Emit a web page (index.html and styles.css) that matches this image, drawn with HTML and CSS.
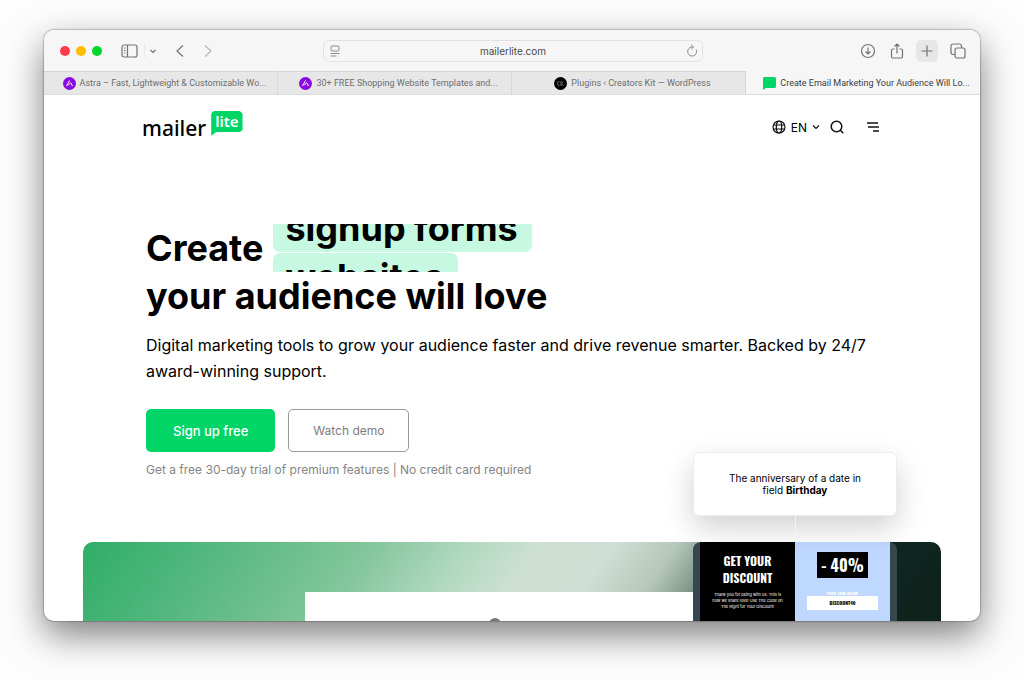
FILE: index.html
```html
<!DOCTYPE html>
<html lang="en">
<head>
    <meta charset="UTF-8">
    <meta name="viewport" content="width=device-width, initial-scale=1.0">
    <title>Create Email Marketing Your Audience Will Love</title>
    <link rel="stylesheet" href="styles.css">
</head>
<body>
    <div class="window">
        <div class="toolbar">
            <div class="toolbar-left">
                <div class="lights">
                    <span class="light red"></span>
                    <span class="light yellow"></span>
                    <span class="light green"></span>
                </div>
                <button class="tool" aria-label="Sidebar">
                    <svg width="18" height="16" viewBox="0 0 18 16"><rect x="1" y="2" width="15" height="12" rx="2"/><path d="M6.500 2v12M3 5h1.500M3 7.500h1.500M3 10h1.500"/></svg>
                </button>
                <button class="tool drop" aria-label="Tab groups">
                    <svg width="8" height="8" viewBox="0 0 8 8"><path d="M1.500 3L4 5.500 6.500 3"/></svg>
                </button>
                <button class="tool back" aria-label="Back">
                    <svg width="10" height="14" viewBox="0 0 10 14"><path d="M8 1.500L2 7l6 5.500"/></svg>
                </button>
                <button class="tool forward" aria-label="Forward">
                    <svg width="10" height="14" viewBox="0 0 10 14"><path d="M2 1.500L8 7l-6 5.500"/></svg>
                </button>
            </div>
            <div class="address">
                <svg width="10" height="12" viewBox="0 0 10 12"><rect x="1" y="1" width="8" height="5" rx="1"/><path d="M.500 8.500h9M.500 11h6"/></svg>
                <input type="text" value="mailerlite.com" aria-label="Address">
                <button class="reload" aria-label="Reload">
                    <svg width="12" height="13" viewBox="0 0 12 13"><path d="M10.200 5.500A4.500 4.500 0 1 1 6 3h1.500M5.200 .800L7.500 3 5.200 5.300"/></svg>
                </button>
            </div>
            <div class="toolbar-right">
                <button class="tool" aria-label="Downloads">
                    <svg width="16" height="16" viewBox="0 0 16 16"><circle cx="8" cy="8" r="6.500"/><path d="M8 4.500v6.500M5.500 8.500L8 11l2.500-2.500"/></svg>
                </button>
                <button class="tool" aria-label="Share">
                    <svg width="14" height="16" viewBox="0 0 14 16"><path d="M4.500 6H3a1.500 1.500 0 0 0-1.500 1.500v6A1.500 1.500 0 0 0 3 15h8a1.500 1.500 0 0 0 1.500-1.500v-6A1.500 1.500 0 0 0 11 6H9.500M7 10.500V1M4.500 3.500L7 1l2.500 2.500"/></svg>
                </button>
                <button class="tool add" aria-label="New tab">
                    <svg width="12" height="12" viewBox="0 0 12 12"><path d="M6 .500v11M.500 6h11"/></svg>
                </button>
                <button class="tool" aria-label="Tab overview">
                    <svg width="16" height="16" viewBox="0 0 16 16"><rect x="5" y="5" width="10" height="10" rx="2"/><path d="M5 11.500H3a2 2 0 0 1-2-2V3a2 2 0 0 1 2-2h6.500a2 2 0 0 1 2 2v2"/></svg>
                </button>
            </div>
        </div>
        <nav class="tabs">
            <a class="tab" href="#">
                <svg width="13" height="13" viewBox="0 0 13 13"><circle cx="6.500" cy="6.500" r="6.500" fill="#8a0be0"/><path d="M3.500 9l3-5.500M7.500 5.500L9.500 9M5.300 8.300l1.500-2" stroke="#fff" fill="none"/></svg>
                <span>Astra – Fast, Lightweight &amp; Customizable Wo...</span>
            </a>
            <a class="tab" href="#">
                <svg width="13" height="13" viewBox="0 0 13 13"><circle cx="6.500" cy="6.500" r="6.500" fill="#8a0be0"/><path d="M3.500 9l3-5.500M7.500 5.500L9.500 9M5.300 8.300l1.500-2" stroke="#fff" fill="none"/></svg>
                <span>30+ FREE Shopping Website Templates and...</span>
            </a>
            <a class="tab" href="#">
                <svg width="13" height="13" viewBox="0 0 13 13"><circle cx="6.500" cy="6.500" r="6.500"/><path d="M5.500 4.500A2 2 0 1 0 5.500 8.500M7 4v5M9.500 4.500L7.500 6.500l2 2.500" stroke="#999" stroke-width=".7" fill="none"/></svg>
                <span>Plugins ‹ Creators Kit — WordPress</span>
            </a>
            <a class="tab active" href="#">
                <svg width="13" height="13" viewBox="0 0 13 13"><path d="M1.500 0h10A1.500 1.500 0 0 1 13 1.500v8a1.500 1.500 0 0 1-1.500 1.500H3L0 13V1.500A1.500 1.500 0 0 1 1.500 0z" fill="#00d566"/></svg>
                <span>Create Email Marketing Your Audience Will Lo...</span>
            </a>
        </nav>

        <div class="page">
            <header class="header">
                <a class="logo" href="#">
                    <span class="logo-name">mailer</span>
                    <span class="logo-badge">lite</span>
                </a>
                <div class="menu">
                    <button class="lang">
                        <svg width="14" height="14" viewBox="0 0 14 14"><circle cx="7" cy="7" r="6"/><ellipse cx="7" cy="7" rx="2.700" ry="6"/><path d="M1.500 5h11M1.500 9h11"/></svg>
                        EN
                        <svg width="8" height="8" viewBox="0 0 8 8"><path d="M1 2.500l3 3 3-3"/></svg>
                    </button>
                    <button class="search" aria-label="Search">
                        <svg width="14" height="14" viewBox="0 0 14 14"><circle cx="6.500" cy="6.500" r="5.300"/><path d="M10.300 10.300L13.300 13.300"/></svg>
                    </button>
                    <button class="burger" aria-label="Menu">
                        <svg width="12" height="12" viewBox="0 0 12 12"><path d="M0 2h11M1 6h11M6 10h6"/></svg>
                    </button>
                </div>
            </header>

            <section class="hero">
                <h1>
                    <span class="first-line">
                        Create
                        <span class="rotator">
                            <span class="word">signup forms</span>
                            <span class="word">websites</span>
                        </span>
                    </span>
                    your audience will love
                </h1>
                <p class="lead">Digital marketing tools to grow your audience faster and drive revenue smarter. Backed by 24/7 award-winning support.</p>
                <div class="actions">
                    <button class="btn primary">Sign up free</button>
                    <button class="btn outline">Watch demo</button>
                </div>
                <p class="note">Get a free 30-day trial of premium features | No credit card required</p>
            </section>

            <section class="art">
                <div class="sheet"><span class="dot"></span></div>
                <div class="phone">
                    <div class="trigger">
                        <p>The anniversary of a date in field <b>Birthday</b></p>
                    </div>
                    <div class="promo dark">
                        <h2>GET YOUR DISCOUNT</h2>
                        <p>Thank you for being with us. This is how we share love! Use The Code on The Right for Your Discount!</p>
                    </div>
                    <div class="promo blue">
                        <strong>- 40%</strong>
                        <small>YOUR CODE BELOW</small>
                        <span class="code">DISCOUNT40</span>
                    </div>
                </div>
            </section>
        </div>
    </div>
</body>
</html>
```
FILE: styles.css
```css
* {
    box-sizing: border-box;
}

body {
    margin: 0;
    height: 100vh;
    padding: 30px 44px 59px;
    background: #fdfdfd;
    font-family: Inter, "Liberation Sans", sans-serif;
    color: #000;
    overflow: hidden;
}

button {
    display: flex;
    align-items: center;
    justify-content: center;
    padding: 0;
    border: none;
    background: none;
    font-family: inherit;
    color: inherit;
    cursor: pointer;
}

a {
    color: inherit;
    text-decoration: none;
}

.window {
    display: flex;
    flex-direction: column;
    height: 100%;
    overflow: hidden;
    border-radius: 10px;
    background: #fff;
    box-shadow: 0 0 1px 1px rgba(0, 0, 0, 0.2), 0 14px 36px rgba(0, 0, 0, 0.5);
}

/* browser toolbar */
.toolbar {
    flex: none;
    display: flex;
    align-items: center;
    height: 41px;
    padding: 0 14px 0 16px;
    background: #f7f6f7;
}

.toolbar svg {
    fill: none;
    stroke: #737373;
    stroke-width: 1.2;
}

.toolbar-left,
.toolbar-right {
    flex: 1;
    display: flex;
    align-items: center;
}

.toolbar-right {
    justify-content: flex-end;
    gap: 14px;
}

.lights {
    display: flex;
    gap: 6px;
    margin-right: 19px;
}

.light {
    width: 10px;
    height: 10px;
    border-radius: 50%;
}

.red {
    background: #ff3b4b;
}

.yellow {
    background: #ffbf00;
}

.green {
    background: #00d52b;
}

.drop {
    height: 14px;
    margin: 0 18px 0 5px;
    padding-left: 4px;
    border-left: 1px solid #e9e9e9;
}

.forward {
    margin-left: 18px;
}

.toolbar .forward svg {
    stroke: #b5b5b5;
}

.toolbar .add {
    width: 22px;
    height: 22px;
    margin: 0 -2px;
    border-radius: 5px;
    background: #e8e7e8;
}

.address {
    display: flex;
    align-items: center;
    width: 42%;
    height: 22px;
    padding: 0 4px 0 6px;
    border: 1px solid #e3e2e3;
    border-radius: 6px;
}

.address input {
    flex: 1;
    min-width: 0;
    border: none;
    outline: none;
    background: none;
    font-family: inherit;
    font-size: 10px;
    text-align: center;
    color: #4a4a4a;
}

.toolbar .address svg {
    stroke: #8c8c8c;
    stroke-width: 1;
}

/* tabs */
.tabs {
    flex: none;
    display: flex;
    height: 24px;
    border-bottom: 1px solid #dcdcdc;
    background: #e8e7e8;
}

.tab {
    flex: 1;
    min-width: 0;
    display: flex;
    align-items: center;
    justify-content: center;
    gap: 4px;
    padding: 0 6px 0 14px;
    border-top: 1px solid #d4d3d4;
    border-right: 1px solid #d9d8d9;
    font-family: Roboto, "Liberation Sans", sans-serif;
    font-size: 9px;
    color: #6e6e6e;
    white-space: nowrap;
}

.tab svg {
    flex: none;
}

.tab.active {
    border-color: #f7f6f7;
    background: #f7f6f7;
    color: #3c3c3c;
}

/* site header */
.page {
    flex: 1;
    min-height: 0;
    display: flex;
    flex-direction: column;
}

.header {
    flex: none;
    display: flex;
    align-items: flex-start;
    justify-content: space-between;
    height: 60px;
    padding: 16px 101px 0 98px;
}

.logo {
    display: flex;
    align-items: flex-start;
    gap: 5px;
    font-family: "Noto Sans", "Open Sans", sans-serif;
}

.logo-name {
    padding-top: 4px;
    font-size: 21px;
    font-weight: 500;
    line-height: 26px;
}

.logo-badge {
    height: 26px;
    padding: 0 4px 4px;
    background: #00d566;
    border-radius: 3px;
    clip-path: polygon(0 3px, 1px 1px, 3px 0, 28px 0, 30px 1px, 100% 3px, 100% 19px, 30px 20px, 28px 21px, 5px 21px, 0 25px);
    font-size: 15px;
    font-weight: 600;
    line-height: 21px;
    color: #fff;
}

.menu {
    display: flex;
    align-items: center;
    height: 32px;
}

.menu svg {
    fill: none;
    stroke: #111;
    stroke-width: 1.2;
}

.lang {
    gap: 5px;
    font-size: 12px;
}

.search {
    margin: 0 23px 0 10px;
}

.menu .search svg,
.menu .burger svg {
    stroke-width: 1.500;
}

/* hero */
.hero {
    flex: none;
    padding: 69px 100px 62px 102px;
}

h1 {
    margin: 0 0 12px;
    font-size: 36px;
    line-height: 48px;
    font-weight: 700;
}

.first-line {
    display: flex;
    gap: 10px;
}

.rotator {
    display: flex;
    flex-direction: column;
    justify-content: center;
    align-items: flex-start;
    height: 48px;
    padding-top: 10px;
    overflow: hidden;
}

.word {
    flex: none;
    padding: 0 14px 0 12px;
    border-bottom: 1px solid #fff;
    border-radius: 7px;
    background: #c6f8e2;
}

.lead {
    margin: 0 0 25px;
    font-size: 16px;
    line-height: 26px;
}

.actions {
    display: flex;
    gap: 13px;
    margin-bottom: 8px;
}

.btn {
    height: 43px;
    border-radius: 5px;
}

.primary {
    padding: 0 27px;
    background: #00d566;
    font-size: 13px;
    font-weight: 500;
    color: #fff;
}

.outline {
    padding: 0 24px;
    border: 1px solid #999;
    font-size: 12px;
    color: #7d7d7d;
}

.note {
    margin: 0;
    font-size: 12px;
    line-height: 20px;
    color: #858585;
}

/* illustration */
.art {
    flex: 1;
    display: grid;
    grid-template-columns: 222px 1fr 204px 44px;
    margin: 0 39px;
    border-radius: 10px 10px 0 0;
    background: linear-gradient(124deg, #2fae66 0%, #55b880 15%, #84c69b 32%, #b0d8bf 42%, #cde0d3 50%, #cfdfd5 58%, #b5c7bb 65%, #64806f 72%, #0f2b27 80%, #0f211a 100%);
}

.sheet {
    grid-column: 2;
    display: flex;
    justify-content: center;
    margin-top: 50px;
    padding: 26px 8px 0 0;
    background: #fff;
}

.dot {
    width: 12px;
    height: 12px;
    border-radius: 50%;
    background: #777;
}

.phone {
    position: relative;
    display: flex;
    padding: 0 7px;
    border-radius: 8px 8px 0 0;
    background: #36474f;
}

.trigger {
    position: absolute;
    left: 0;
    right: 0;
    bottom: 100%;
    margin-bottom: 26px;
    padding: 19px 30px;
    border: 1px solid #ececec;
    border-radius: 6px;
    background: #fff;
    box-shadow: 0 12px 30px rgba(0, 0, 0, 0.18);
}

.trigger::after {
    content: "";
    position: absolute;
    top: 100%;
    left: 50%;
    width: 1px;
    height: 26px;
    background: #f4f4f4;
}

.trigger p {
    margin: 0;
    font-size: 10px;
    line-height: 12px;
    text-align: center;
}

.promo {
    flex: 1;
    display: flex;
    flex-direction: column;
    align-items: center;
    padding: 10px 12px 0;
    font-family: Oswald, "Roboto Condensed", "Liberation Sans Narrow", "Liberation Sans", sans-serif;
    text-align: center;
}

.dark {
    background: #000;
    color: #fff;
}

.dark h2 {
    margin: 0 0 6px;
    font-size: 12px;
    line-height: 17px;
}

.dark p {
    margin: 0;
    font-family: Inter, sans-serif;
    font-size: 4px;
    line-height: 6px;
}

.blue {
    background: #bfd8ff;
}

.blue strong {
    padding: 0 4px;
    background: #000;
    font-size: 16px;
    line-height: 26px;
    color: #fff;
}

.blue small {
    margin-top: 12px;
    font-size: 4px;
    line-height: 6px;
    font-weight: 700;
    color: #fff;
}

.code {
    align-self: stretch;
    background: #fff;
    font-size: 5px;
    line-height: 14px;
    font-weight: 700;
}
```
